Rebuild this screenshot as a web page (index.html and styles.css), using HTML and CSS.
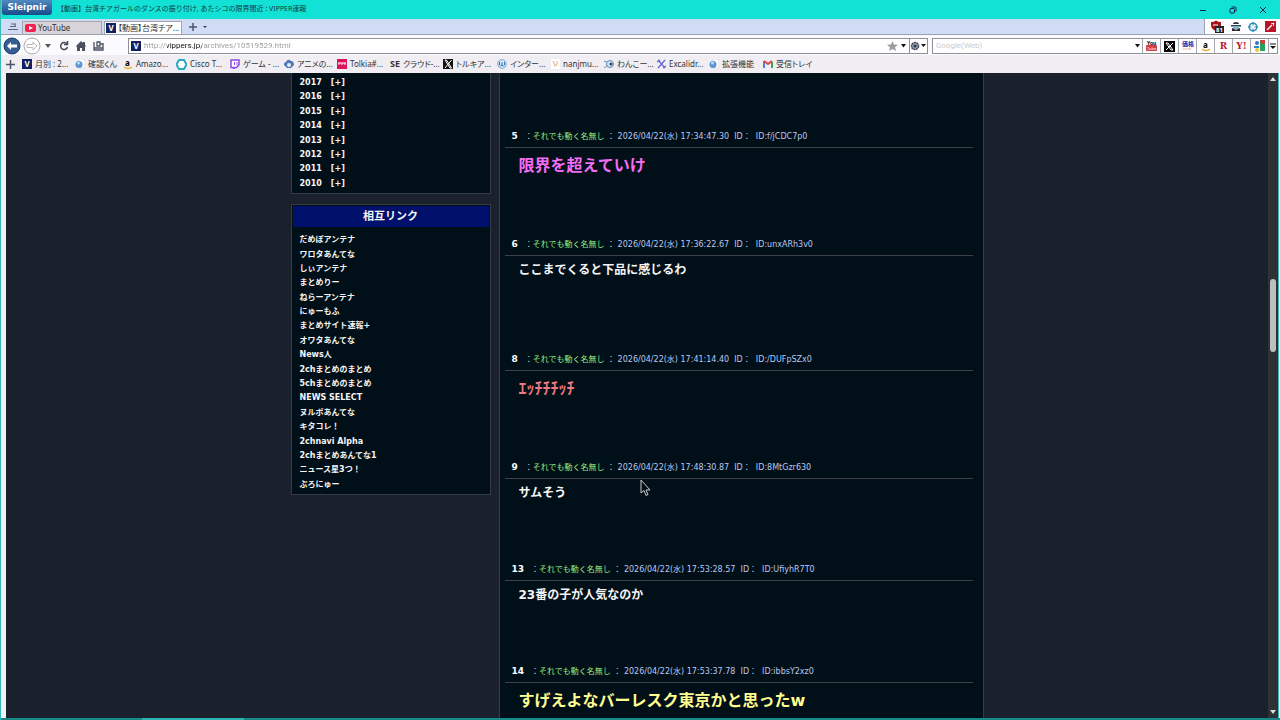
FILE: index.html
```html
<!DOCTYPE html>
<html lang="ja">
<head>
<meta charset="utf-8">
<title>【動画】台湾チアガールのダンスの振り付け : VIPPER速報</title>
<link rel="stylesheet" href="styles.css">
</head>
<body>
<header class="titlebar">
  <button class="brand">Sleipnir</button>
  <h1 class="window-title">【動画】台湾チアガールのダンスの振り付け, あたシコの限界間近 : VIPPER速報</h1>
  <div class="window-buttons">
    <button aria-label="最小化"><svg width="8" height="8"><path d="M1 4.500h6" stroke="#124" fill="none"/></svg></button>
    <button aria-label="元に戻す"><svg width="8" height="8" fill="none" stroke="#124"><rect x="1" y="2.500" width="4.500" height="4.500" rx="1"/><path d="M2.500 1H6q1 0 1 1v3.500"/></svg></button>
    <button aria-label="閉じる"><svg width="8" height="8"><path d="M1 1l6 6M7 1l-6 6" stroke="#124" fill="none"/></svg></button>
  </div>
</header>

<nav class="tabs">
  <button class="tab-list" aria-label="タブ一覧"><svg width="10" height="8" fill="none" stroke="#5a6577"><path d="M3 1h5M2 3.500h6M0 6.500h10M7 1v3"/></svg></button>
  <button class="tab"><svg width="11" height="8"><rect width="11" height="8" rx="2" fill="#f02050"/><path d="M4 2l4 2-4 2z" fill="#fff"/></svg>YouTube</button>
  <button class="tab current"><span class="v">V</span>【動画】台湾チア...</button>
  <button class="plain" aria-label="新しいタブ"><svg width="10" height="10"><path d="M5 1v8M1 5h8" stroke="#4a5568" stroke-width="1.500"/></svg></button>
  <button class="plain" aria-label="タブメニュー"><svg width="6" height="4"><path d="M1 1h4l-2 2z" fill="#334"/></svg></button>
  <div class="extensions">
    <button aria-label="広告ブロック"><svg width="14" height="14"><path d="M1 2q3 0 5-1.500q2 1.500 5 1.500v3q0 4-5 6q-5-2-5-6z" fill="#a4131c"/><path d="M3 5h5" stroke="#fff"/><rect x="5" y="6" width="9" height="7" fill="#222"/><text x="6" y="12" font-size="6" font-weight="bold" fill="#fff">81</text></svg></button>
    <button aria-label="エージェント"><svg width="10" height="11"><path d="M2 3q0-2 3-2t3 2z" fill="#334"/><path d="M0 4h10v1.500h-10z" fill="#335"/><rect x="2" y="5" width="6" height="3" fill="#77b9c5"/><path d="M1 7l4 2 4-2v3H1z" fill="#223"/><path d="M4 8h2l-1 2z" fill="#e55"/></svg></button>
    <button aria-label="ターゲット"><svg width="10" height="10" fill="none" stroke="#288ab8" stroke-width="1.500"><circle cx="5" cy="5" r="3.800"/><path d="M5 0v3.500M5 6.500v3.500M0 5h3.500M6.500 5h3.500" stroke-width="1"/></svg></button>
    <button aria-label="ツール"><svg width="11" height="11"><rect width="11" height="11" fill="#b91525"/><path d="M2 9l5-5M7 2v1M9 4h-1M8 3l1-1" stroke="#fff" stroke-width="1.300"/></svg></button>
  </div>
</nav>

<div class="toolbar">
  <div class="navigation">
    <button aria-label="戻る"><svg width="18" height="18"><circle cx="9" cy="9" r="8" fill="#345d94" stroke="#1e3e6c"/><path d="M4 9l4-4v2.500h6v3H8V13z" fill="#fff"/></svg></button>
    <button aria-label="進む"><svg width="18" height="18" fill="#fff" stroke="#aaa"><circle cx="9" cy="9" r="8"/><path d="M14 9l-4-4v2.500H4v3h6V13z" stroke="#bbb"/></svg></button>
    <button class="history" aria-label="履歴"><svg width="6" height="4"><path d="M0 0h6l-3 4z" fill="#556"/></svg></button>
    <button aria-label="更新"><svg width="10" height="10" fill="none" stroke="#454b57" stroke-width="1.500"><path d="M8 3A3.500 3.500 0 1 0 8.500 6"/><path d="M5 3.500h3.500V0"/></svg></button>
    <button aria-label="ホーム"><svg width="10" height="10" fill="#4a5260"><path d="M0 5l5-5 2 2V1h2v3l1 1-1 1v4H6V7H4v3H1V6z"/></svg></button>
    <button aria-label="ブックマーク"><svg width="11" height="10" fill="none" stroke="#4a5260" stroke-width="1.300"><path d="M1 1v8h9V2M1 7h9M4 1h3v4H4zM7 3h3"/></svg></button>
  </div>
  <div class="address">
    <span class="v">V</span>
    <input class="url" type="text" aria-label="アドレス" value="http://vippers.jp/archives/10519529.html">
    <button aria-label="お気に入り"><svg width="11" height="10"><path d="M5.500 0l1.500 3.500 4 .3-3 2.500 1 3.700-3.500-2L2 10l1-3.700L0 3.800l4-.3z" fill="#9b9ba0"/></svg></button>
    <button aria-label="アドレス一覧"><svg width="5" height="4"><path d="M0 0h5L2.500 3.500z" fill="#111"/></svg></button>
    <button class="engine" aria-label="エンジン"><svg width="16" height="10"><circle cx="5" cy="5" r="3.500" fill="#9ba4b4" stroke="#414858" stroke-width="1.500" stroke-dasharray="2 .5"/><circle cx="5" cy="5" r="1.500" fill="#273858"/><path d="M11 3h5l-2.500 3z" fill="#111"/></svg></button>
  </div>
  <div class="search">
    <input type="search" aria-label="検索" placeholder="Google(Web)">
    <button class="drop" aria-label="検索先"><svg width="5" height="4"><path d="M0 0h5L2.500 3.500z" fill="#111"/></svg></button>
    <button aria-label="YouTube"><svg width="12" height="12"><text x="1" y="5" font-size="5" font-weight="bold">You</text><rect y="5" width="11" height="6" rx="1" fill="#d33b46"/><text x="1" y="10" font-size="4" fill="#fff">Tube</text></svg></button>
    <button aria-label="X"><svg width="11" height="11"><rect width="11" height="11" fill="#050505"/><path d="M2 2h2l5 7H7zM9 2L2 9" stroke="#fff" fill="none"/></svg></button>
    <button aria-label="価格.com"><svg width="14" height="12"><text x="1" y="6" font-size="6" font-weight="bold" fill="#1d2fac">価格</text><text x="1" y="10" font-size="4" fill="#e3a167">.com</text></svg></button>
    <button aria-label="Amazon"><svg width="10" height="12"><text x="2" y="8" font-size="8" font-weight="bold">a</text><path d="M1 9q4 3 8 0" fill="none" stroke="#eba72b" stroke-width="1.300"/></svg></button>
    <button class="r" aria-label="楽天">R</button>
    <button class="y" aria-label="Yahoo">Y!</button>
    <button aria-label="Google"><svg width="12" height="12"><rect x="6" width="5" height="11" fill="#25a259"/><path d="M6 0h5v4H7z" fill="#d63b35"/><circle cx="3" cy="3" r="2" fill="#3975c5"/><path d="M0 6h5v2H0z" fill="#2d85c8"/><circle cx="3" cy="10" r="2" fill="#ecc33b"/></svg></button>
    <button class="more" aria-label="その他"><svg width="6" height="7"><path d="M0 1h6" stroke="#111"/><path d="M0 3h6l-3 3z" fill="#111"/></svg></button>
  </div>
</div>

<nav class="bookmarks">
  <button class="add" aria-label="追加"><svg width="9" height="9"><path d="M4.500 0v9M0 4.500h9" stroke="#4a5568" stroke-width="1.500"/></svg></button>
  <a href="#"><span class="v">V</span>月別 : 2...</a>
  <a href="#"><svg width="10" height="10"><path d="M4 0h5l1 2v7H4z" fill="#fff" stroke="#ddd"/><circle cx="4" cy="5.500" r="3.500" fill="#5e94cf"/><circle cx="3.500" cy="4" r="1.500" fill="#b9ddf5"/></svg>確認くん</a>
  <a href="#"><svg width="9" height="12"><text x="1" y="8" font-size="8" font-weight="bold">a</text><path d="M0 9q4 3 8 0" fill="none" stroke="#e5b020" stroke-width="1.300"/></svg>Amazo...</a>
  <a href="#"><svg width="11" height="11"><path d="M3 1h5l2.500 4.500L8 10H3L.5 5.500z" fill="#fff" stroke="#2ba8c2" stroke-width="2"/></svg>Cisco T...</a>
  <a href="#"><svg width="10" height="10"><path d="M1 1h8v5L6.500 8.500H5L3.500 10V8.500H1z" fill="#fff" stroke="#8a48e5" stroke-width="1.500"/><path d="M4.500 3v3M7 3v3" stroke="#8a48e5"/></svg>ゲーム - ...</a>
  <a href="#"><svg width="10" height="10"><path d="M0 6q0-3 2-3 2-4 5-1 3 0 3 4l-3 3H3z" fill="#4e78b8"/><circle cx="5" cy="6" r="2" fill="#e9edf2"/></svg>アニメの...</a>
  <a href="#"><svg width="10" height="10"><rect width="10" height="10" fill="#df1458"/><path d="M1 4h8M2 4v2M5 4v2M8 4v2" stroke="#fff"/></svg>Tolkia#...</a>
  <a href="#"><b class="se">SE</b>クラウド-...</a>
  <a href="#"><svg width="10" height="10"><rect width="10" height="10" fill="#111"/><path d="M2 1h1.500l5 8H7zM8.500 1L2 9" stroke="#fff" fill="none"/></svg>トルキア...</a>
  <a href="#"><svg width="10" height="10"><circle cx="5" cy="5" r="4.300" fill="#deedf8" stroke="#6ea6cd"/><path d="M2.500 3v3q1 2 2.500 0V3m0 3q1.500 2 2.500 0V3" fill="none" stroke="#2872ae"/></svg>インター...</a>
  <a href="#"><svg width="9" height="10"><rect width="9" height="10" fill="#fff"/><path d="M2 2l2 4M6 2v3q0 2-3 2" stroke="#dcad70" fill="none"/></svg>nanjmu...</a>
  <a href="#"><svg width="10" height="10"><circle cx="6" cy="5" r="3.500" fill="#d5e5f5" stroke="#6287b4"/><circle cx="7" cy="5" r="1.500" fill="#224472"/><path d="M0 2l3 1M0 9l3-2" stroke="#7794b8"/></svg>わんこー...</a>
  <a href="#"><svg width="9" height="10"><path d="M1 1l7 8M8 1L1 9M0 3l3-2M6 9l3-2" stroke="#6965d5" stroke-width="1.300"/></svg>Excalidr...</a>
  <a href="#"><svg width="10" height="10"><path d="M4 0h5l1 2v7H4z" fill="#fff" stroke="#ddd"/><circle cx="4" cy="5.500" r="3.500" fill="#5e94cf"/><circle cx="3.500" cy="4" r="1.500" fill="#b9ddf5"/></svg>拡張機能</a>
  <a href="#"><svg width="10" height="8" fill="none" stroke-width="2"><path d="M1 8V1" stroke="#4684e8"/><path d="M9 8V2" stroke="#35a558"/><path d="M1 1l4 3 4-3" stroke="#e24438"/></svg>受信トレイ</a>
</nav>

<div class="viewport">
  <div class="page">
    <aside class="sidebar">
      <section class="box archive">
        <ul>
          <li><a href="#">2017</a><a href="#">[+]</a></li>
          <li><a href="#">2016</a><a href="#">[+]</a></li>
          <li><a href="#">2015</a><a href="#">[+]</a></li>
          <li><a href="#">2014</a><a href="#">[+]</a></li>
          <li><a href="#">2013</a><a href="#">[+]</a></li>
          <li><a href="#">2012</a><a href="#">[+]</a></li>
          <li><a href="#">2011</a><a href="#">[+]</a></li>
          <li><a href="#">2010</a><a href="#">[+]</a></li>
        </ul>
      </section>
      <section class="box links">
        <h2>相互リンク</h2>
        <ul>
          <li><a href="#">だめぽアンテナ</a></li>
          <li><a href="#">ワロタあんてな</a></li>
          <li><a href="#">しぃアンテナ</a></li>
          <li><a href="#">まとめりー</a></li>
          <li><a href="#">ねらーアンテナ</a></li>
          <li><a href="#">にゅーもふ</a></li>
          <li><a href="#">まとめサイト速報+</a></li>
          <li><a href="#">オワタあんてな</a></li>
          <li><a href="#">News人</a></li>
          <li><a href="#">2chまとめのまとめ</a></li>
          <li><a href="#">5chまとめのまとめ</a></li>
          <li><a href="#">NEWS SELECT</a></li>
          <li><a href="#">ヌルポあんてな</a></li>
          <li><a href="#">キタコレ！</a></li>
          <li><a href="#">2chnavi Alpha</a></li>
          <li><a href="#">2chまとめあんてな1</a></li>
          <li><a href="#">ニュース星3つ！</a></li>
          <li><a href="#">ぶろにゅー</a></li>
        </ul>
      </section>
    </aside>
    <main class="thread">
      <article class="post">
        <header><b>5</b><span class="name">：<em>それでも動く名無し</em> ：</span> 2026/04/22(水) 17:34:47.30&nbsp; ID：&nbsp; ID:f/jCDC7p0</header>
        <p class="large pink">限界を超えていけ</p>
      </article>
      <article class="post spaced">
        <header><b>6</b><span class="name">：<em>それでも動く名無し</em> ：</span> 2026/04/22(水) 17:36:22.67&nbsp; ID：&nbsp; ID:unxARh3v0</header>
        <p>ここまでくると下品に感じるわ</p>
      </article>
      <article class="post">
        <header><b>8</b><span class="name">：<em>それでも動く名無し</em> ：</span> 2026/04/22(水) 17:41:14.40&nbsp; ID：&nbsp; ID:/DUFpSZx0</header>
        <p class="large red">ｴｯﾁﾁﾁｯﾁ</p>
      </article>
      <article class="post">
        <header><b>9</b><span class="name">：<em>それでも動く名無し</em> ：</span> 2026/04/22(水) 17:48:30.87&nbsp; ID：&nbsp; ID:8MtGzr630</header>
        <p>サムそう</p>
      </article>
      <article class="post">
        <header><b>13</b><span class="name">：<em>それでも動く名無し</em> ：</span> 2026/04/22(水) 17:53:28.57&nbsp; ID：&nbsp; ID:UfiyhR7T0</header>
        <p>23番の子が人気なのか</p>
      </article>
      <article class="post">
        <header><b>14</b><span class="name">：<em>それでも動く名無し</em> ：</span> 2026/04/22(水) 17:53:37.78&nbsp; ID：&nbsp; ID:ibbsY2xz0</header>
        <p class="large yellow">すげえよなバーレスク東京かと思ったw</p>
      </article>
    </main>
  </div>
  <div class="scrollbar">
    <svg width="8" height="6"><path d="M4 1l3 4H1z" fill="#ddd"/></svg>
    <div class="thumb"></div>
    <svg width="8" height="6"><path d="M4 5l3-4H1z" fill="#ddd"/></svg>
  </div>
</div>
<div class="taskbar"></div>
<svg class="cursor" width="11" height="18"><path d="M1 1v13l3-2.500 2 5 2-1-2-4.500h4z" fill="#050d14" stroke="#ccc"/></svg>
</body>
</html>
```

FILE: styles.css
```css
* { box-sizing: border-box; }

body {
  margin: 0;
  height: 100vh;
  overflow: hidden;
  display: flex;
  flex-direction: column;
  background: #f0eef2;
  border-left: 1px solid #39b9b5;
  color: #333;
  font: 8px/12px "Noto Sans", "Noto Sans CJK JP", sans-serif;
}

button, input {
  margin: 0;
  padding: 0;
  border: 0;
  background: none;
  color: inherit;
  font: inherit;
}

button { display: flex; align-items: center; justify-content: center; }
svg { display: block; flex: none; }
a { color: inherit; text-decoration: none; }
ul, p, h1, h2 { margin: 0; padding: 0; list-style: none; }

.v {
  flex: none;
  width: 10px;
  height: 10px;
  background: #12205f;
  color: #fff;
  font-weight: bold;
  line-height: 10px;
  text-align: center;
}

.titlebar {
  display: flex;
  flex: none;
  height: 19px;
  background: #12e2d6;
}

.brand {
  width: 50px;
  height: 15px;
  margin-left: 1px;
  border-radius: 0 0 3px 3px;
  background: linear-gradient(#5189bf, #174a8b);
  color: #fff;
  font: bold 9px/15px "DejaVu Sans", sans-serif;
}

.window-title {
  flex: 1;
  padding-left: 5px;
  font-size: 7px;
  font-weight: normal;
  line-height: 18px;
  color: #123a40;
}

.window-buttons { display: flex; align-items: center; gap: 22px; padding-right: 13px; }

.tabs {
  display: flex;
  flex: none;
  height: 16px;
  padding-left: 6px;
  align-items: center;
  background: #d0dcf6;
  border-bottom: 1px solid #9aa2b0;
}

.tab-list { width: 12px; margin-right: 3px; }

.tab {
  width: 80px;
  height: 13px;
  margin-right: 2px;
  padding: 0 2px;
  gap: 2px;
  align-self: end;
  justify-content: flex-start;
  border: 1px solid #a5a5ad;
  border-bottom: 0;
  background: #d7d3d9;
  white-space: nowrap;
  font-feature-settings: "palt";
}

.tab.current { width: 78px; padding: 0 0 0 1px; background: #fff; }
.plain { margin-left: 4px; }

.extensions {
  display: flex;
  align-items: center;
  align-self: stretch;
  gap: 7px;
  margin-left: auto;
  padding: 0 4px 0 5px;
  background: #fff;
  border-left: 1px solid #9aa2b0;
}

.toolbar {
  display: flex;
  flex: none;
  height: 20px;
  align-items: center;
  padding: 2px 2px 0;
  background: #fbfafc;
}

.navigation { display: flex; align-items: center; gap: 7px; width: 125px; }
.navigation button:nth-child(2) { margin-left: -5px; }
.history { margin: 0 1px 0 -3px; }

.address, .search {
  display: flex;
  align-items: center;
  height: 16px;
  border: 1px solid #8f8f96;
  background: #fff;
}

.address { flex: 800; padding-left: 2px; gap: 3px; }

.url, .search input { font-family: Roboto, sans-serif; }

.url {
  flex: 1;
  min-width: 0;
  color: transparent;
  background: linear-gradient(90deg, #999 23px, #111 23px 58px, #999 58px);
  background-clip: text;
}

.engine { width: 18px; height: 14px; border-left: 1px solid #8f8f96; }

.search { flex: 346; margin-left: 4px; }
.search input { flex: 1; min-width: 0; padding-left: 3px; }
.search input::placeholder { color: #ccc; }
.search button { width: 18px; height: 14px; border-left: 1px solid #a5a5ad; }
.search .drop { width: 10px; border-left: 0; }
.search .more { width: 9px; }
.search .r, .search .y { color: #bd1630; font: bold 9px/14px "DejaVu Serif", serif; }

.bookmarks {
  display: grid;
  grid-template-columns: 16px 53px 49px 52px 54px 54px 53px 53px 53px 54px 54px 53px 53px 52px 54px auto;
  flex: none;
  height: 18px;
  padding-left: 5px;
  justify-content: start;
  align-items: center;
  font-feature-settings: "palt";
}

.bookmarks a { display: flex; align-items: center; gap: 3px; white-space: nowrap; }
.add { justify-content: flex-start; }
.se { font-size: 9px; }

.viewport {
  display: flex;
  flex: 1;
  min-height: 0;
  margin: 0 1px 0 0;
  border-left: 5px solid #eef3f5;
  border-right: 1px solid #39b9b5;
  background: #1b212c;
  overflow: hidden;
}

.page {
  display: flex;
  flex: 1;
  justify-content: center;
  gap: 8px;
  color: #f5f5f5;
  font-family: "DejaVu Sans", "Noto Sans CJK JP", sans-serif;
  overflow: hidden;
}

.sidebar { width: 200px; }

.box {
  margin-bottom: 10px;
  border: 1px solid #333b45;
  background: #010f18;
  font-weight: bold;
  line-height: 1.8;
}

.box ul { padding: 3px 8px 2px; }
.archive { border-top: 0; }
.archive li { display: flex; gap: 9px; }

.links h2 {
  margin: 1px;
  background: #00106b;
  font-size: 11px;
  line-height: 21px;
  text-align: center;
}

.links ul { padding-top: 5px; }

.thread {
  width: 485px;
  padding: 56px 10px 0 5px;
  border: solid #333b45;
  border-width: 0 1px;
  background: #010f18;
}

.post { margin-bottom: 58px; }
.post.spaced { margin-bottom: 71px; }

.post header {
  padding: 0 7px 2px;
  border-bottom: 1px solid #3d4145;
  color: #b9c8f0;
  line-height: 16px;
}

.post b { margin-right: 7px; color: #fff; font-size: 9px; line-height: 1; }
.name { color: #b8d8c0; }
.name em { color: #98ec80; font-style: normal; }

.post p {
  padding: 4px 14px 0;
  font-size: 12px;
  font-weight: bold;
  line-height: 21px;
}

.post .large { font-size: 16px; line-height: 27px; }
.post .pink { color: #f56cf5; }
.post .red { color: #f07880; }
.post .yellow { color: #ffff90; }

.scrollbar {
  position: relative;
  display: flex;
  flex-direction: column;
  justify-content: space-between;
  align-items: center;
  width: 10px;
  padding: 3px 0;
  background: #2d3237;
}

.thumb {
  position: absolute;
  top: 32%;
  width: 6px;
  height: 73px;
  border-radius: 3px;
  background: #bebebe;
}

.taskbar { flex: none; height: 2px; background: linear-gradient(90deg, #168a88 11%, #2bb5b0 11% 19%, #168a88 19%); }

.cursor { position: absolute; left: 640px; top: 479px; }
```
